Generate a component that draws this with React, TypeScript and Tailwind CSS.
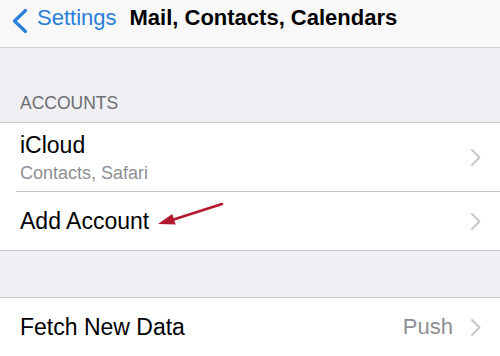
import React from "react";

function Chevron() {
  return (
    <svg width="12" height="19" viewBox="0 0 12 19" fill="none" className="shrink-0">
      <path d="M2 2 L9.5 9.5 L2 17" stroke="#c7c7cc" strokeWidth="2" strokeLinecap="round" strokeLinejoin="round" />
    </svg>
  );
}

export default function App() {
  const font = { fontFamily: '"Liberation Sans", Arial, sans-serif' };
  return (
    <div className="relative w-[500px] h-[356px] overflow-hidden bg-[#efeff4]" style={font}>
      {/* Nav bar */}
      <div className="flex items-start h-[48px] bg-[#f8f8f8] border-b border-[#d2d2d6] pl-[10px] pt-[5px]">
        <svg width="20" height="26" viewBox="0 0 20 26" fill="none" className="mt-[3px] shrink-0">
          <path d="M15.5 2.5 L4.5 13 L15.5 23.5" stroke="#2a7fd8" strokeWidth="3.2" strokeLinecap="round" strokeLinejoin="round" />
        </svg>
        <span className="ml-[7px] text-[22px] leading-[26px] text-[#2a7fd8]">Settings</span>
        <span className="ml-[13px] text-[22px] leading-[26px] font-bold text-black">Mail, Contacts, Calendars</span>
      </div>

      {/* Section header */}
      <div className="pl-[20px] pt-[45px] pb-[9px] text-[17.5px] leading-[20px] text-[#6d6d72]">ACCOUNTS</div>

      {/* Accounts group */}
      <div className="bg-white border-y border-[#c8c7cc]">
        <div className="flex items-center pr-[18px]">
          <div className="flex-1 pl-[20px] pt-[8px] pb-[7px]">
            <div className="text-[23px] leading-[28px] text-black">iCloud</div>
            <div className="mt-[3px] text-[18px] leading-[22px] text-[#8e8e93]">Contacts, Safari</div>
          </div>
          <Chevron />
        </div>
        <div className="ml-[16px] h-px bg-[#c8c7cc]" />
        <div className="relative flex items-center h-[58px] pl-[20px] pr-[18px]">
          <span className="flex-1 text-[23px] leading-[28px] text-black">Add Account</span>
          <Chevron />
          <svg width="80" height="36" viewBox="0 0 80 36" fill="none" className="absolute left-[150px] top-[6px] pointer-events-none">
            <path d="M72 6 L22 22" stroke="#b3192c" strokeWidth="2.6" strokeLinecap="round" />
            <path d="M8 26 L25.7 26.5 L22.2 16 Z" fill="#b3192c" />
          </svg>
        </div>
      </div>

      <div className="h-[46px]" />

      <div className="bg-white border-t border-[#c8c7cc]">
        <div className="flex items-center h-[58px] pl-[20px] pr-[18px]">
          <span className="flex-1 text-[23px] leading-[28px] text-black">Fetch New Data</span>
          <span className="mr-[17px] text-[22px] leading-[28px] text-[#8e8e93]">Push</span>
          <Chevron />
        </div>
      </div>
    </div>
  );
}
